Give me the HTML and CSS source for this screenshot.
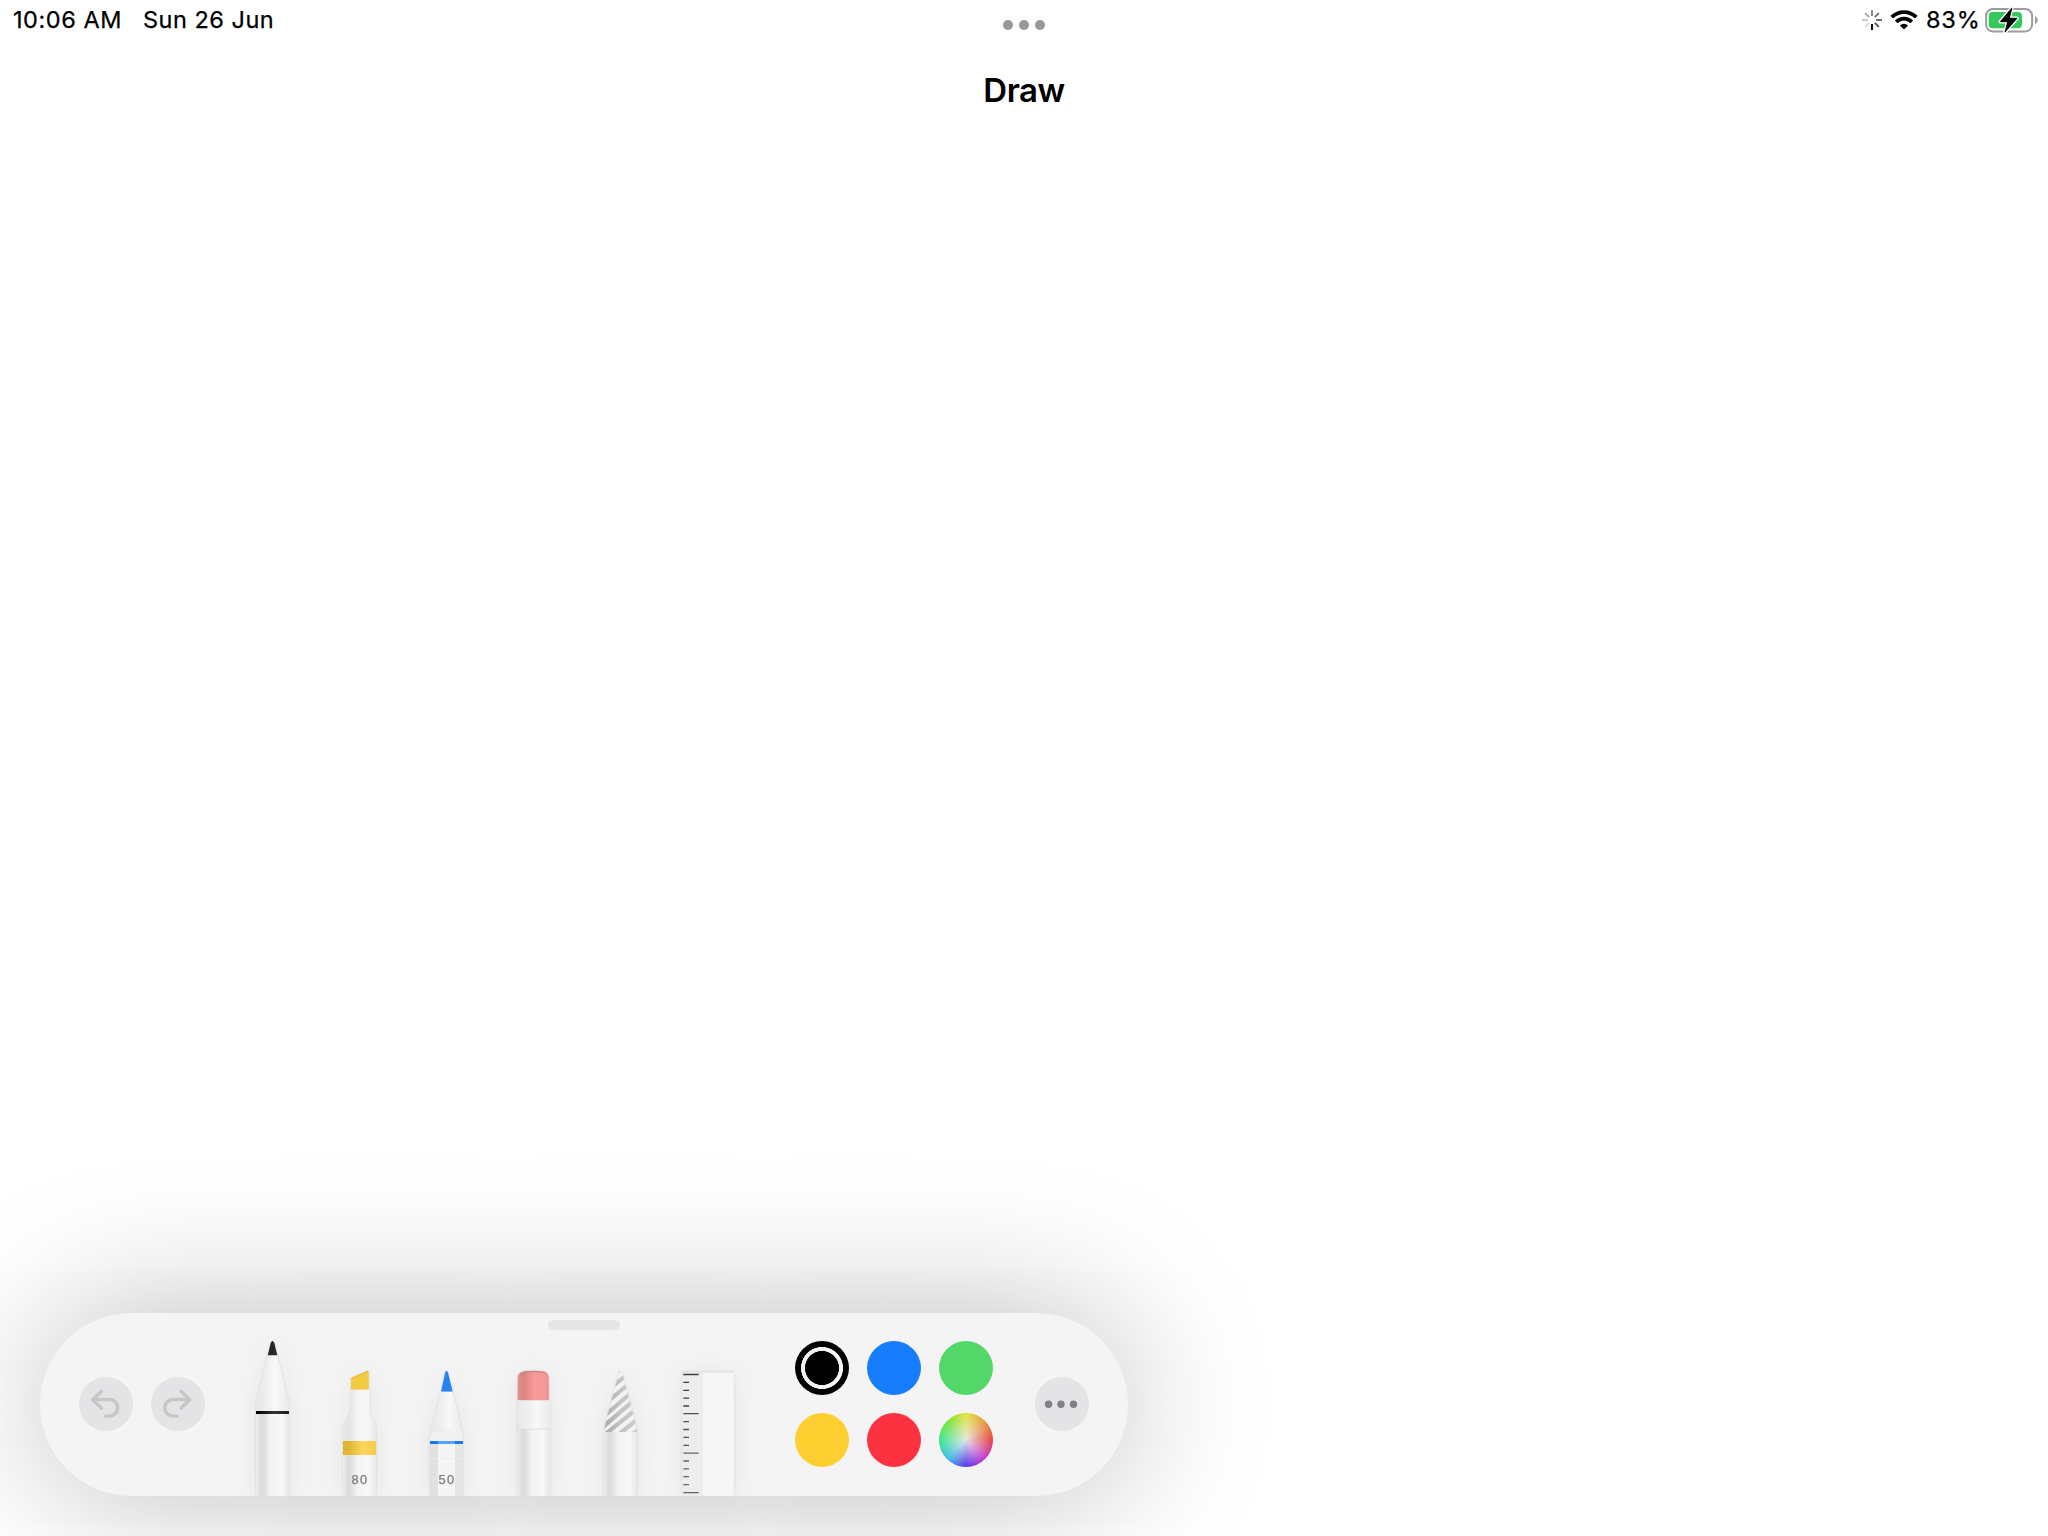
FILE: index.html
```html
<!DOCTYPE html>
<html lang="en">
<head>
<meta charset="utf-8">
<title>Draw</title>
<link rel="stylesheet" href="styles.css">
</head>
<body>
<div class="screen">
  <header class="status">
    <div class="status-left"><span class="time">10:06 AM</span><span class="date">Sun 26 Jun</span></div>
    <div class="multitask"><i></i><i></i><i></i></div>
    <div class="status-right">
      <svg class="spinner" width="20" height="20" viewBox="-10 -10 20 20" fill="none" stroke="#000" stroke-width="1.9">
        <path d="M0 4V10"/><path d="M0-4V-10" opacity=".48"/><path d="M2.8-2.8 6.9-6.9" opacity=".55"/><path d="M4 0H10" opacity=".6"/><path d="M2.8 2.8 6.9 6.9" opacity=".68"/><path d="M-2.8 2.8-6.9 6.9" opacity=".15"/><path d="M-4 0H-10" opacity=".22"/><path d="M-2.8-2.8-6.9-6.9" opacity=".35"/>
      </svg>
      <svg class="wifi" width="28" height="20" viewBox="0 0 28 20">
        <g fill="none" stroke="#000" stroke-width="3.8"><path d="M1.700 7.200a17.400 17.400 0 0 1 24.600 0"/><path d="M6.200 11.800a11 11 0 0 1 15.600 0"/></g>
        <path d="M14 19.600 9.900 15.500a5.900 5.900 0 0 1 8.200 0z"/>
      </svg>
      <span class="percent">83%</span>
      <svg class="battery" width="54" height="26" viewBox="0 0 54 26">
        <rect x="1.100" y="2" width="46" height="22.400" rx="6.800" fill="#fff" stroke="#9c9c9c" stroke-width="2"/>
        <rect x="3.700" y="5" width="33.300" height="16.200" rx="4" fill="#34c759"/>
        <path d="M50 9.200c1.600.6 2.600 2.200 2.600 4s-1 3.400-2.600 4z" fill="#9c9c9c"/>
        <path d="M26.900.9 15.300 14.700h7.400L20 25.100 32 11.300h-7.600z" fill="#000" stroke="#fff" stroke-width="3.400" paint-order="stroke" stroke-linejoin="round"/>
        <path d="M26.900.9 15.300 14.700h7.400L20 25.100 32 11.300h-7.600z" fill="#000" stroke="#000" stroke-width=".8" stroke-linejoin="round"/>
      </svg>
    </div>
  </header>
  <h1 class="title">Draw</h1>
  <main class="canvas"></main>
  <section class="palette">
    <div class="handle"></div>
    <div class="history">
      <button class="round" aria-label="Undo"><svg width="54" height="54" viewBox="0 0 54 54"><path d="M22.500 14.300 13.600 22.700l8.900 8.500M14 22.500h16.500a8.300 8.300 0 0 1 0 16.600h-4"/></svg></button>
      <button class="round" aria-label="Redo"><svg width="54" height="54" viewBox="0 0 54 54"><path d="m30 14.300 8.900 8.400-8.900 8.500M38.500 22.500H22a8.300 8.300 0 0 0 0 16.600h4"/></svg></button>
    </div>
    <div class="tools">
      <svg class="tool" width="33" height="155" viewBox="0 0 33 155">
        <defs>
          <linearGradient id="body"><stop offset="0" stop-color="#eee"/><stop offset=".06" stop-color="#e5e5e5"/><stop offset=".16" stop-color="#dadada"/><stop offset=".28" stop-color="#e2e2e2"/><stop offset=".42" stop-color="#f3f3f3"/><stop offset=".8" stop-color="#f7f7f7"/><stop offset=".92" stop-color="#ececec"/><stop offset="1" stop-color="#e8e8e8"/></linearGradient>
          <linearGradient id="cone"><stop offset="0" stop-color="#e6e7e8"/><stop offset=".35" stop-color="#eeeff0"/><stop offset=".58" stop-color="#f8f8f8"/><stop offset="1" stop-color="#eaeaea"/></linearGradient>
          <linearGradient id="ink"><stop offset="0" stop-color="#000"/><stop offset=".25" stop-color="#111"/><stop offset=".55" stop-color="#333"/><stop offset="1" stop-color="#1c1c1c"/></linearGradient>
          <linearGradient id="gold"><stop offset="0" stop-color="#dcb52d"/><stop offset=".2" stop-color="#dfb731"/><stop offset=".6" stop-color="#fad65c"/><stop offset="1" stop-color="#f5ce48"/></linearGradient>
          <linearGradient id="rubber"><stop offset="0" stop-color="#e39391"/><stop offset=".18" stop-color="#da8481"/><stop offset=".55" stop-color="#f69b99"/><stop offset=".9" stop-color="#f59997"/><stop offset="1" stop-color="#e48d8b"/></linearGradient>
          <linearGradient id="hatchTone"><stop offset="0" stop-color="#a9abad"/><stop offset=".5" stop-color="#c2c3c5"/><stop offset="1" stop-color="#ccc"/></linearGradient>
        </defs>
        <path d="M0 155V64L12 14h9l12 50v91z" fill="url(#body)"/>
        <path d="M12 14h9l11.600 46q.4 2 .4 4v6H0v-6q0-2 .4-4z" fill="url(#cone)"/>
        <path d="M11.800 14.200 14.700 2q1.800-3.800 3.600 0l3 12.200z" fill="#262626"/>
        <path d="M0 70h33v3H0z" fill="url(#ink)"/>
      </svg>
      <svg class="tool" width="33" height="125" viewBox="0 0 33 125">
        <path d="M0 125V60q0-6 3-10 5-6 5-14V18.500h18.500V36q0 8 4 14 2.500 4 2.500 10v65z" fill="url(#body)"/>
        <path d="M0 70V60q0-6 3-10 5-6 5-14V18.500h18.500V36q0 8 4 14 2.500 4 2.500 10v10z" fill="url(#cone)" opacity=".6"/>
        <path d="M8 8.600q0-1.200 1-1.800L24 .2q1.700-.6 1.700 1v17.300H8z" fill="#f3cb40"/>
        <path d="M8.300 7.500 24.700.4" stroke="#dfb630" stroke-width="1"/>
        <path d="M0 70h33v14H0z" fill="url(#gold)"/>
        <text class="mark" x="17" y="113">80</text>
      </svg>
      <svg class="tool" width="33" height="125" viewBox="0 0 33 125">
        <path d="M0 125V66q0-3 .8-6L11 20.500h11.500L32.200 60q.8 3 .8 6v59z" fill="url(#cone)"/>
        <path d="M0 64 4 60.500q4 .5 5 3.500l3-4q5-2 10 0l3.500 4q2-3 5-3.500L33 64v6H0z" fill="#f0f0f0"/>
        <path d="M0 73h8v52H0z" fill="#e1e1e1"/><path d="M8 73h17v52H8z" fill="#f5f5f5"/><path d="M25 73h8v52h-8z" fill="#e5e5e5"/>
        <path d="M0 87.500h33" stroke="#ececec" stroke-width=".8"/>
        <path d="M11 20.500 15.200 1.500q1.400-2.800 2.800 0l4.600 19z" fill="#2783f0"/>
        <path d="M0 70h33v3H0z" fill="#1b76e8"/><path d="M8 70h17v3H8z" fill="#579ff8"/>
        <text class="mark" x="17" y="113">50</text>
      </svg>
      <svg class="tool" width="33" height="125" viewBox="0 0 33 125">
        <path d="M.5 58H33v67H.5z" fill="url(#body)"/>
        <path d="M0 29.500h33V58H0z" fill="url(#cone)"/>
        <path d="M.7 29V7q0-5 5-6 10.500-1.600 21 0 5 1 5 6v22z" fill="url(#rubber)"/>
        <path d="M3 3.500Q5 1.200 8 .9q8-1 17 0 3 .3 5 2.600" fill="none" stroke="#d37f7d" stroke-width="1.300"/>
        <path d="M.5 58.200H33" stroke="#dedede"/>
      </svg>
      <svg class="tool" width="33" height="125" viewBox="0 0 33 125">
        <clipPath id="point"><path d="M0 61 2 50 15 1q1.500-2 3 0l13 49 2 11z"/></clipPath>
        <path d="M0 61h33v64H0z" fill="url(#body)"/>
        <g clip-path="url(#point)">
          <path d="M0 0h33v61H0z" fill="#f3f3f4"/>
          <g fill="url(#hatchTone)">
            <path d="M0 8 33-19v6L0 14z"/><path d="M0 19.500 33-7v5.200L0 25z"/><path d="M0 31 33 3.500v5L0 36.500z"/><path d="M0 42.500 33 14v5.500L0 48z"/><path d="M0 52 33 24v5.500L0 58z"/><path d="M0 61.500 33 35v5.500L0 67z"/><path d="M0 72.500 33 46v5.500L0 78z"/><path d="M0 83.500 33 57v5.500L0 89z"/>
          </g>
        </g>
      </svg>
      <svg class="tool ruler" width="52" height="125" viewBox="0 0 52 125">
        <path d="M0 1h52v124H0z" fill="#f6f6f6"/><path d="M0 1h21v124H0z" fill="#ededed"/><path d="M0 1.200h52" stroke="#e2e2e2"/>
        <g stroke="#3c3c3c" stroke-width="1.300"><path d="M1.300 3.500h15.400M1.300 11.400H7M1.300 19.300H7M1.300 27.200H7M1.300 35H7"/></g>
        <g stroke="#505050" stroke-width="1.300"><path d="M1.300 42.700h15.400M1.300 50.600H7M1.300 58.500H7M1.300 66.400H7M1.300 74.300H7"/></g>
        <g stroke="#626262" stroke-width="1.300"><path d="M1.300 82.200h15.400M1.300 90H7M1.300 97.900H7M1.300 105.700H7M1.300 113.600H7M1.300 121.600h15.400"/></g>
      </svg>
    </div>
    <div class="swatches">
      <button class="swatch black" aria-label="Black"></button><button class="swatch blue" aria-label="Blue"></button><button class="swatch green" aria-label="Green"></button>
      <button class="swatch yellow" aria-label="Yellow"></button><button class="swatch red" aria-label="Red"></button><button class="swatch wheel" aria-label="More colours"></button>
    </div>
    <button class="round more" aria-label="More"><svg width="54" height="54" viewBox="0 0 54 54"><circle cx="13.600" cy="27.300" r="3.700"/><circle cx="26" cy="27.300" r="3.700"/><circle cx="38.500" cy="27.300" r="3.700"/></svg></button>
  </section>
</div>
</body>
</html>
```
FILE: styles.css
```css
* { box-sizing: border-box; }
body { margin: 0; background: #fff; color: #000; font-family: Inter, "Liberation Sans", sans-serif; }
button { border: 0; padding: 0; }
.screen { width: 2048px; height: 1536px; overflow: hidden; display: flex; flex-direction: column; padding-bottom: 40px; }
.status { height: 48px; display: grid; grid-template-columns: 1fr auto 1fr; font-size: 23.5px; line-height: 40px; font-weight: 400; -webkit-text-stroke: .25px #000; }
.status-left { display: flex; gap: 22px; padding-left: 13px; }
.time { width: 108px; white-space: nowrap; letter-spacing: .55px; }
.date { white-space: nowrap; letter-spacing: .5px; }
.multitask { display: flex; gap: 6px; padding-top: 20px; }
.multitask i { width: 10px; height: 10px; border-radius: 50%; background: #999; }
.status-right { display: flex; justify-content: flex-end; height: 40px; align-items: center; padding-right: 9px; }
.wifi { margin: 0 8px 0 8px; }
.percent { width: 54px; letter-spacing: .8px; white-space: nowrap; }
.battery { margin-left: 5px; }
.title { margin: 22px 0 0; text-align: center; font-size: 33px; line-height: 41px; font-weight: 570; letter-spacing: -.45px; }
.canvas { flex: 1; margin-top: -1px; }
.palette { position: relative; width: 1088px; height: 183px; margin-left: 40px; padding: 0 39px; border-radius: 91.5px; background: #f4f4f4; box-shadow: 0 0 150px rgba(0, 0, 0, .27); display: flex; overflow: hidden; }
.handle { position: absolute; left: 508px; top: 7px; width: 72px; height: 10px; border-radius: 5px; background: #e5e5e6; }
.history { display: flex; gap: 18px; padding-top: 64px; }
.round { width: 54px; height: 54px; border-radius: 50%; background: #e4e4e6; display: flex; }
.history svg { fill: none; stroke: #c6c6c8; stroke-width: 3.4; stroke-linecap: round; stroke-linejoin: round; }
.tools { display: flex; align-items: flex-end; gap: 54px; margin-left: 51px; }
.tool { display: block; overflow: visible; filter: drop-shadow(0 0 1px rgba(0, 0, 0, .13)) drop-shadow(0 3px 12px rgba(0, 0, 0, .06)); }
.ruler { margin-left: -9px; }
.mark { font-family: "Liberation Sans", sans-serif; font-size: 12.8px; font-weight: 400; letter-spacing: 1.3px; text-anchor: middle; fill: #7c7c7e; stroke: #7c7c7e; stroke-width: .25px; }
.swatches { display: grid; grid-template-columns: repeat(3, 54px); grid-auto-rows: 54px; gap: 18px; margin-left: 61px; padding-top: 28px; }
.swatch { border-radius: 50%; }
.black { background: radial-gradient(circle, #000 16.7px, #f4f4f4 17.3px, #f4f4f4 20.7px, #000 21.3px); }
.blue { background: #167efc; }
.green { background: #53d769; }
.yellow { background: #fecf30; }
.red { background: #fd3241; }
.wheel { background: radial-gradient(circle, rgba(232, 232, 232, .95), rgba(232, 232, 232, 0) 71%), conic-gradient(#e3e23b, #e69a3c 45deg, #e6403b 90deg, #c936c9 132deg, #5635e6 180deg, #38bfe6 225deg, #36e68a 270deg, #74e632 315deg, #e3e23b); }
.more { margin: 64px 0 0 42px; }
.more svg { fill: #818185; }
```
